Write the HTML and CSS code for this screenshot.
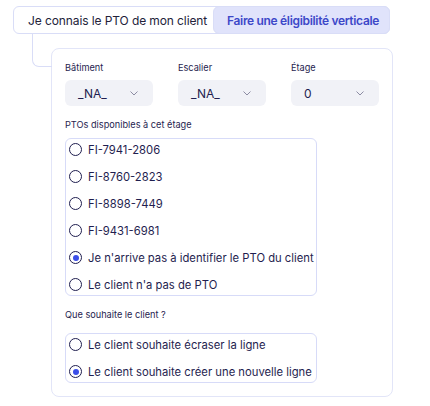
FILE: index.html
```html
<!DOCTYPE html>
<html lang="fr">
<head>
<meta charset="utf-8">
<link rel="stylesheet" href="styles.css">
</head>
<body>
<div class="page">
  <div class="tabs">
    <div class="tab">Je connais le PTO de mon client</div>
    <div class="tab active">Faire une éligibilité verticale</div>
  </div>
  <div class="branch">
    <div class="card">
      <div class="selects">
        <div class="field">
          <div class="label">Bâtiment</div>
          <div class="select"><span>_NA_</span><svg class="chev" width="8" height="5" viewBox="0 0 8 5"><path d="M0.5 0.5 L4 4 L7.5 0.5" fill="none" stroke="#8c8ca3" stroke-width="1"/></svg></div>
        </div>
        <div class="field">
          <div class="label">Escalier</div>
          <div class="select"><span>_NA_</span><svg class="chev" width="8" height="5" viewBox="0 0 8 5"><path d="M0.5 0.5 L4 4 L7.5 0.5" fill="none" stroke="#8c8ca3" stroke-width="1"/></svg></div>
        </div>
        <div class="field">
          <div class="label">Étage</div>
          <div class="select"><span>0</span><svg class="chev" width="8" height="5" viewBox="0 0 8 5"><path d="M0.5 0.5 L4 4 L7.5 0.5" fill="none" stroke="#8c8ca3" stroke-width="1"/></svg></div>
        </div>
      </div>

      <div class="label section">PTOs disponibles à cet étage</div>
      <div class="radios">
        <div class="radio"><span class="dot"></span>FI-7941-2806</div>
        <div class="radio"><span class="dot"></span>FI-8760-2823</div>
        <div class="radio"><span class="dot"></span>FI-8898-7449</div>
        <div class="radio"><span class="dot"></span>FI-9431-6981</div>
        <div class="radio checked"><span class="dot"></span>Je n'arrive pas à identifier le PTO du client</div>
        <div class="radio"><span class="dot"></span>Le client n'a pas de PTO</div>
      </div>

      <div class="label section">Que souhaite le client ?</div>
      <div class="radios second">
        <div class="radio"><span class="dot"></span>Le client souhaite écraser la ligne</div>
        <div class="radio checked"><span class="dot"></span>Le client souhaite créer une nouvelle ligne</div>
      </div>
    </div>
  </div>
</div>
</body>
</html>
```

FILE: styles.css
```css
* { box-sizing: border-box; }
html, body { margin: 0; padding: 0; background: #ffffff; }
body {
  font-family: Inter, "Noto Sans", "Liberation Sans", sans-serif;
  color: #1f1e4f;
}
.page {
  padding: 6px 0 0 13px;
}
.tabs {
  display: flex;
  width: 377px;
  height: 28px;
  border: 1px solid #d9ddf7;
  border-radius: 6px;
}
.tab {
  display: flex;
  align-items: center;
  font-size: 12px;
  color: #23223a;
  letter-spacing: -0.1px;
}
.tab:first-child {
  width: 199px;
  padding-left: 14px;
}
.tab.active {
  flex: 1;
  margin: -1px -1px -1px 0;
  padding-left: 13px;
  background: #e0e3fb;
  border: 1px solid #d9ddf7;
  border-radius: 6px;
  color: #3d48c9;
  font-weight: 600;
  letter-spacing: -0.32px;
}
.branch {
  position: relative;
  padding: 14px 0 0 38px;
}
.branch::before {
  content: "";
  position: absolute;
  left: 19px;
  top: 0;
  width: 19px;
  height: 32px;
  border-left: 1px solid #d9ddf7;
  border-bottom: 1px solid #d9ddf7;
  border-bottom-left-radius: 7px;
}
.card {
  width: 342px;
  border: 1px solid #e2e5f8;
  border-radius: 8px;
  padding: 13px 13px 13px 13px;
}
.selects {
  display: flex;
  justify-content: space-between;
}
.field { width: 88px; }
.label {
  font-size: 9.2px;
  line-height: 12px;
  color: #1f1e4f;
}
.select {
  margin-top: 6px;
  height: 26px;
  background: #f1f2f7;
  border-radius: 6px;
  display: flex;
  align-items: center;
  justify-content: space-between;
  padding: 0 15px 0 13px;
  font-size: 12px;
  color: #1f1e4f;
}
.chev { display: block; }
.section { margin-top: 13px; }
.radios {
  margin-top: 7px;
  width: 252px;
  border: 1px solid #d7dbf8;
  border-radius: 6px;
  padding: 0 3px;
  display: flex;
  flex-direction: column;
  gap: 6px;
}
.radios.second { margin-top: 12px; }
.radio {
  height: 21px;
  display: flex;
  align-items: center;
  gap: 6px;
  font-size: 11.25px;
  color: #1f1e4f;
  white-space: nowrap;
}
.dot {
  width: 13px;
  height: 13px;
  border: 1.3px solid #1f1e4f;
  border-radius: 50%;
  flex: none;
  display: flex;
  align-items: center;
  justify-content: center;
}
.radio.checked .dot::after {
  content: "";
  width: 6px;
  height: 6px;
  border-radius: 50%;
  background: #3b4ee8;
}
```
